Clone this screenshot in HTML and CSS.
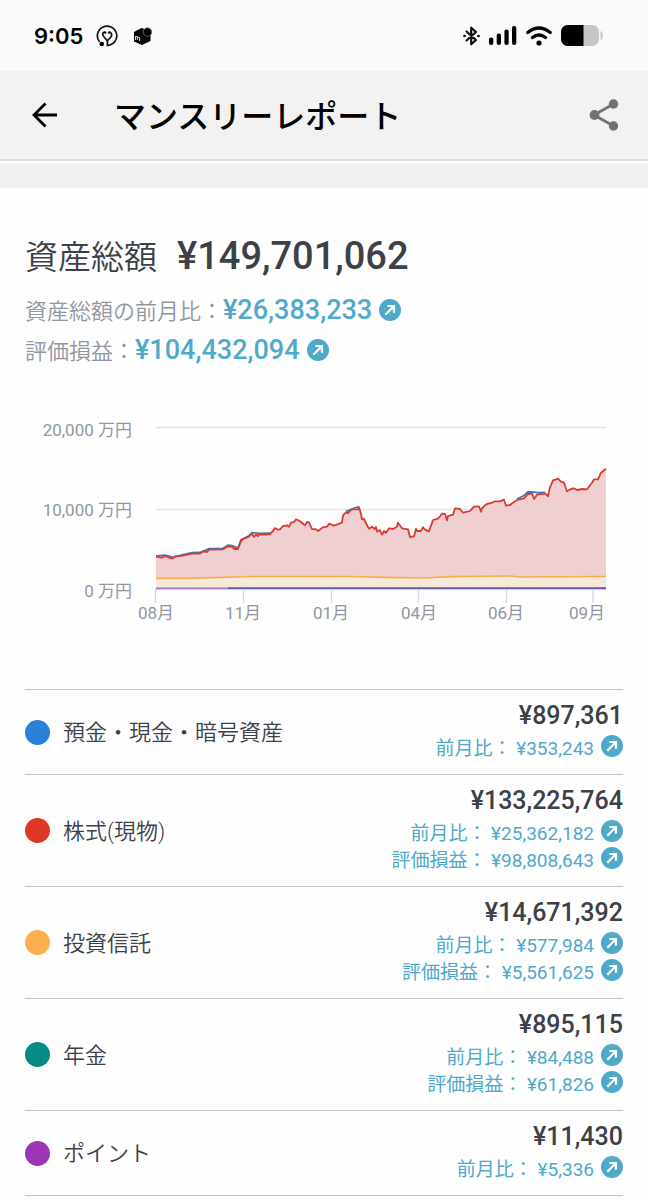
FILE: index.html
```html
<!DOCTYPE html>
<html lang="ja">
<head>
<meta charset="utf-8">
<meta name="viewport" content="width=device-width, initial-scale=1">
<title>マンスリーレポート</title>
<link rel="stylesheet" href="styles.css">
</head>
<body>
<svg class="defs" aria-hidden="true">
  <symbol id="up" viewBox="0 0 22 22">
    <circle cx="11" cy="11" r="11" fill="#4ea9cb"/>
    <path d="M6.300 15.700 14 8M8.300 7H15v6.700" fill="none" stroke="#fff" stroke-width="2.200"/>
  </symbol>
</svg>
<div class="status">
  <div class="status-side">
    <span class="clock">9:05</span>
    <svg class="app-pin" viewBox="0 0 22 22" aria-hidden="true">
      <path d="M3.600 17A9.700 9.700 0 1 1 11.400 20.500V16.400C11 13.900 6.700 12.400 6.700 9.300 6.700 7.500 8 7 9.300 7.200M12.900 7.200c2.800-.2 3.500 3.400 1.700 5.100-1.500 1.400-3 2.400-3.200 4.100" fill="none" stroke="#111" stroke-width="1.700"/>
      <circle cx="9.300" cy="7.700" r="1.100"/><circle cx="12.900" cy="7.700" r="1.100"/>
      <circle cx="5.800" cy="19" r="2.300"/>
    </svg>
    <svg class="app-box" viewBox="0 0 19 18" aria-hidden="true">
      <path d="M1 5 8.500 1 17.500 4V14L9 18 1 14.500Z"/>
      <circle cx="14.500" cy="5" r="4.300" stroke="#888" stroke-width=".7"/>
      <path d="M2.500 13V9.200l1.800.4V13m0-3 2.300.5v3.500" fill="none" stroke="#ddd" stroke-width="1"/>
    </svg>
  </div>
  <div class="status-side status-right">
    <svg class="bluetooth" viewBox="0 0 17 20" aria-hidden="true">
      <path d="M3.500 5.500 13 14 8.200 18.300V1.700L13 6 3.500 14.500" fill="none" stroke="#111" stroke-width="2.200" stroke-linejoin="round" stroke-linecap="round"/>
      <circle cx="1.500" cy="10" r="1.300"/><circle cx="15.500" cy="10" r="1.300"/>
    </svg>
    <svg class="signal" viewBox="0 0 28 20" aria-hidden="true">
      <rect x="0" y="11.500" width="4.300" height="7.500" rx="2"/><rect x="7.700" y="7.500" width="4.300" height="11.500" rx="2"/><rect x="15.400" y="3.500" width="4.300" height="15.500" rx="2"/><rect x="23" y="0" width="4.300" height="19" rx="2"/>
    </svg>
    <svg class="wifi" viewBox="0 0 26 20" aria-hidden="true">
      <path d="M1.800 6.500Q13-2.500 24.200 6.500M6.500 11.500Q13 6.500 19.500 11.500" fill="none" stroke="#000" stroke-width="3.200" stroke-linecap="round"/>
      <circle cx="13" cy="17" r="2.600"/>
    </svg>
    <svg class="battery" viewBox="0 0 42 21" aria-hidden="true">
      <rect width="38" height="21" rx="6.500" fill="#c6c6c6"/>
      <path d="M22.500 0H6.500A6.500 6.500 0 0 0 0 6.500v8A6.500 6.500 0 0 0 6.500 21h16Z"/>
      <path d="M39.500 6c3 0 3 9 0 9Z" fill="#c6c6c6"/>
    </svg>
  </div>
</div>
<header class="bar">
  <button class="icon-button" type="button" aria-label="戻る">
    <svg class="back" viewBox="0 0 26 26" aria-hidden="true"><path d="M25 13H2M13.500 1.500 2 13l11.500 11.500" fill="none" stroke="#000" stroke-width="2.800"/></svg>
  </button>
  <h1 class="bar-title">マンスリーレポート</h1>
  <button class="icon-button" type="button" aria-label="共有">
    <svg class="share" viewBox="0 0 30 32" aria-hidden="true"><path d="M24.500 5 5 16l19.500 11" fill="none" stroke="#727272" stroke-width="2.800"/><g fill="#727272"><circle cx="24.500" cy="5" r="4.700"/><circle cx="5.500" cy="16" r="4.900"/><circle cx="24.500" cy="27" r="4.700"/></g></svg>
  </button>
</header>
<div class="strip"></div>
<main class="content">
  <section class="summary">
    <h2 class="total"><span>資産総額</span><span class="total-value">¥149,701,062</span></h2>
    <p class="change">資産総額の前月比：<span class="change-value">¥26,383,233</span><svg class="up" aria-hidden="true"><use href="#up"/></svg></p>
    <p class="change">評価損益：<span class="change-value">¥104,432,094</span><svg class="up" aria-hidden="true"><use href="#up"/></svg></p>
  </section>
  <svg class="chart" viewBox="25 410 598 220" role="img" aria-label="資産総額の推移">
    <path d="M156 427.500H606M156 509.500H606" stroke="#e2e3e6" stroke-width="1.500"/>
    <path d="M156 556.700 162 557.700 165 556 170 558 173 558.300 175 556.300 183 555.700 192 553.700 200 553.500 203 551.300 207 552 209 549.700 223 549.300 228 546.300 232 546.700 234 549 238 549 241 541 243 539 249 536.700 252 533.700 254 537 256 534.700 258 536.300 259 534.300 265 534.700 270 534 273 531 275 528 278 529.700 280 529.300 283 526 287 525.300 289 526.700 291 522.700 294 522 296 519.300 300 521.300 305 525.300 307 522 309 522.300 312 529 316 529.300 318 531 323 527.300 327 526.700 329 523.700 334 525.700 342 522.700 343 515.300 346 512.300 348 513.300 350 510.700 353 509.300 358 509.300 359 507.300 361 514.300 362 519.300 364 519 367 525.300 369 528.700 372 526.700 375 529 376 527 377 531.700 380 530 382 534.700 384 531 386 532.700 389 528.300 393 529 397 526.700 398 522.700 402 528.300 408 529.300 410 537 414 536.300 416 528.700 417 531 421 531 423 527.300 425 529.700 429 531.300 433 520 438 518.700 442 513.700 445 514 447 520.300 448 516 453 514.700 455 508.300 460 509 463 512.700 470 511 474 506.700 479 506.300 481 511.700 482 508.300 486 504.300 492 502.700 495 501.300 500 501.300 504 499.700 506 505.700 510 505 513 502.700 517 500 524 498.300 528 494 532 493.300 534 499 537 494.700 545 493.300 548 496.300 550 487.300 553 480.300 558 478.700 561 481.700 564 482.700 567 491.300 571 489 574 488.300 577 490 582 489 587 489.300 592 482.700 594 479.300 598 479.300 601 472.700 606 468.700V577L520 577 510 576 450 576.700 425 578 385 577.300 350 576.500 290 576.500 250 576.500 190 578.300 156 578.300Z" fill="#efcfcf"/>
    <path d="M156 578.300H190L250 576.500H350L385 577.300 425 578 450 576.700 510 576 520 577 606 576.500V588H156Z" fill="#f5e9d8"/>
    <path d="M156 578.300H190L250 576.500H350L385 577.300 425 578 450 576.700 510 576 520 577 606 576.500" fill="none" stroke="#f8ad53" stroke-width="1.700"/>
    <path d="M156 556 165 555.200 173 557.300 183 554.700 192 552.700 200 552.500 209 548.700 223 548.300 228 545.300 232 545.700 238 548 241 540 249 535.700 252 532.700 259 533.500 270 533.200M346 511.500 353 508.500 359 506.500M517 499 524 495.500 528 492 532 491.800 537 492.700 545 492.500" fill="none" stroke="#3c78bd" stroke-width="1.800"/>
    <path d="M156 556.700 162 557.700 165 556 170 558 173 558.300 175 556.300 183 555.700 192 553.700 200 553.500 203 551.300 207 552 209 549.700 223 549.300 228 546.300 232 546.700 234 549 238 549 241 541 243 539 249 536.700 252 533.700 254 537 256 534.700 258 536.300 259 534.300 265 534.700 270 534 273 531 275 528 278 529.700 280 529.300 283 526 287 525.300 289 526.700 291 522.700 294 522 296 519.300 300 521.300 305 525.300 307 522 309 522.300 312 529 316 529.300 318 531 323 527.300 327 526.700 329 523.700 334 525.700 342 522.700 343 515.300 346 512.300 348 513.300 350 510.700 353 509.300 358 509.300 359 507.300 361 514.300 362 519.300 364 519 367 525.300 369 528.700 372 526.700 375 529 376 527 377 531.700 380 530 382 534.700 384 531 386 532.700 389 528.300 393 529 397 526.700 398 522.700 402 528.300 408 529.300 410 537 414 536.300 416 528.700 417 531 421 531 423 527.300 425 529.700 429 531.300 433 520 438 518.700 442 513.700 445 514 447 520.300 448 516 453 514.700 455 508.300 460 509 463 512.700 470 511 474 506.700 479 506.300 481 511.700 482 508.300 486 504.300 492 502.700 495 501.300 500 501.300 504 499.700 506 505.700 510 505 513 502.700 517 500 524 498.300 528 494 532 493.300 534 499 537 494.700 545 493.300 548 496.300 550 487.300 553 480.300 558 478.700 561 481.700 564 482.700 567 491.300 571 489 574 488.300 577 490 582 489 587 489.300 592 482.700 594 479.300 598 479.300 601 472.700 606 468.700" fill="none" stroke="#d93b33" stroke-width="1.800" stroke-linejoin="round"/>
    <path d="M155 589.700H606M155.500 590V603M243.500 590V603M331.500 590V603M418.500 590V603M506.500 590V603M593 590V603" fill="none" stroke="#d0d5ea" stroke-width="1.300"/>
    <path d="M156 588.200H230" stroke="#a673bd" stroke-width="1.500"/>
    <path d="M228 588.200H606" stroke="#65569f" stroke-width="1.800"/>
    <g class="axis" text-anchor="end"><text x="132" y="436">20,000 万円</text><text x="132" y="516">10,000 万円</text><text x="132" y="597">0 万円</text></g>
    <g class="axis" text-anchor="middle"><text x="156" y="619">08月</text><text x="243" y="619">11月</text><text x="331" y="619">01月</text><text x="419" y="619">04月</text><text x="506" y="619">06月</text><text x="587" y="619">09月</text></g>
  </svg>
  <ul class="assets">
    <li class="asset"><span class="dot blue"></span><span class="name">預金・現金・暗号資産</span>
      <div class="figures"><strong class="amount">¥897,361</strong>
        <span class="sub">前月比： ¥353,243<svg class="up" aria-hidden="true"><use href="#up"/></svg></span></div></li>
    <li class="asset"><span class="dot red"></span><span class="name">株式(現物)</span>
      <div class="figures"><strong class="amount">¥133,225,764</strong>
        <span class="sub">前月比： ¥25,362,182<svg class="up" aria-hidden="true"><use href="#up"/></svg></span>
        <span class="sub">評価損益： ¥98,808,643<svg class="up" aria-hidden="true"><use href="#up"/></svg></span></div></li>
    <li class="asset"><span class="dot orange"></span><span class="name">投資信託</span>
      <div class="figures"><strong class="amount">¥14,671,392</strong>
        <span class="sub">前月比： ¥577,984<svg class="up" aria-hidden="true"><use href="#up"/></svg></span>
        <span class="sub">評価損益： ¥5,561,625<svg class="up" aria-hidden="true"><use href="#up"/></svg></span></div></li>
    <li class="asset"><span class="dot teal"></span><span class="name">年金</span>
      <div class="figures"><strong class="amount">¥895,115</strong>
        <span class="sub">前月比： ¥84,488<svg class="up" aria-hidden="true"><use href="#up"/></svg></span>
        <span class="sub">評価損益： ¥61,826<svg class="up" aria-hidden="true"><use href="#up"/></svg></span></div></li>
    <li class="asset"><span class="dot purple"></span><span class="name">ポイント</span>
      <div class="figures"><strong class="amount">¥11,430</strong>
        <span class="sub">前月比： ¥5,336<svg class="up" aria-hidden="true"><use href="#up"/></svg></span></div></li>
  </ul>
</main>
</body>
</html>
```
FILE: styles.css
```css
* { box-sizing: border-box; }
body {
  margin: 0;
  background: #fefefe;
  color: #3c4047;
  font-family: Roboto, "Noto Sans CJK JP", sans-serif;
}
.defs { display: none; }
h1, h2, p, ul { margin: 0; padding: 0; font-weight: 400; }

.status {
  display: flex;
  justify-content: space-between;
  align-items: center;
  height: 71px;
  padding: 0 45px 0 34px;
  background: #fafafa;
}
.status-side { display: flex; align-items: center; }
.clock {
  margin-right: 13px;
  color: #000;
  font: 600 22px/28px Inter, sans-serif;
}
.app-pin { width: 22px; height: 22px; margin-right: 15px; }
.app-box { width: 19px; height: 18px; }
.status-right { gap: 9px; }
.bluetooth { width: 17px; height: 20px; }
.signal { width: 28px; height: 20px; }
.wifi { width: 26px; height: 20px; }
.battery { width: 42px; height: 21px; }

.bar {
  display: flex;
  align-items: center;
  height: 90px;
  padding: 0 22px 0 23px;
  background: #f2f2f2;
  border-bottom: 2px solid #dcdcdc;
}
.icon-button {
  display: flex;
  align-items: center;
  justify-content: center;
  width: 44px;
  height: 48px;
  padding: 0;
  border: 0;
  background: none;
}
.back { width: 26px; height: 26px; }
.share { width: 30px; height: 32px; }
.bar-title {
  flex: 1;
  padding: 4px 0 0 47px;
  color: #000;
  font-size: 32px;
  font-weight: 500;
  line-height: 48px;
}
.strip {
  height: 27px;
  border-top: 2px solid #fefefe;
  background: #f1f1f1;
}

.content { padding: 0 25px; }
.summary { padding: 42px 0 40px; }
.total {
  display: flex;
  align-items: baseline;
  gap: 20px;
  height: 60px;
  font-size: 33px;
  font-weight: 350;
  line-height: 52px;
}
.total-value { font-size: 38px; font-weight: 500; }
.change {
  display: flex;
  align-items: baseline;
  height: 40px;
  color: #9197a1;
  font-size: 22px;
  font-weight: 350;
  line-height: 40px;
}
.change-value { color: #4ea9cb; font-size: 27px; font-weight: 500; }
.up { flex: none; width: 22px; height: 22px; margin-left: 7px; }
.change .up { align-self: center; }

.chart { display: block; width: 100%; }
.axis { fill: #9197a1; font-size: 17px; font-weight: 400; }

.assets { margin-top: 59px; border-bottom: 1px solid #c4c4c4; list-style: none; }
.asset {
  display: flex;
  align-items: center;
  border-top: 1px solid #c4c4c4;
}
.dot { width: 25px; height: 25px; margin-right: 13px; border-radius: 50%; }
.blue { background: #2980d9; }
.red { background: #dd3728; }
.orange { background: #fdae4e; }
.teal { background: #058b85; }
.purple { background: #9b37b7; }
.name { flex: 1; padding-bottom: 4px; font-size: 22px; font-weight: 350; }
.figures {
  display: flex;
  flex-direction: column;
  align-items: flex-end;
  padding: 9px 0 13px;
}
.amount {
  margin-bottom: 1px;
  font-size: 25px;
  font-weight: 500;
  line-height: 34px;
}
.sub {
  display: flex;
  align-items: flex-start;
  height: 27px;
  color: #4ea9cb;
  font-size: 19px;
  line-height: 29px;
  white-space: pre;
}
.sub .up { margin-top: 1px; }
```
